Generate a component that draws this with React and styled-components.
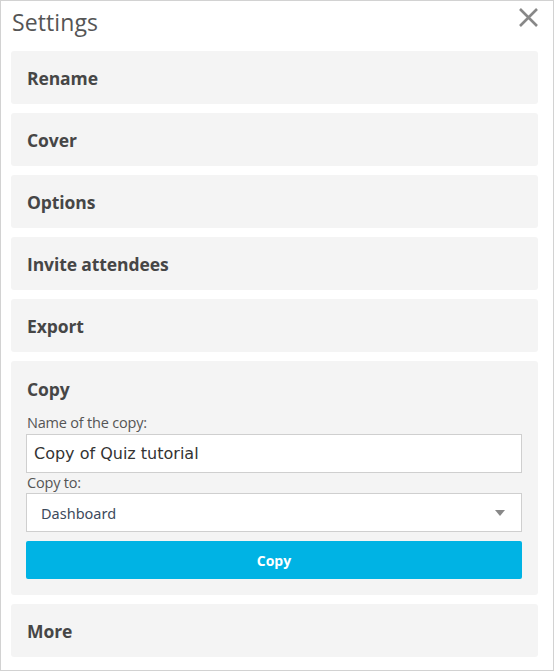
import React from "react";
import styled, { createGlobalStyle } from "styled-components";

const GlobalStyle = createGlobalStyle`
	html, body {
		margin: 0;
		padding: 0;
		background: #fff;
	}
	* {
		box-sizing: border-box;
	}
`;

const sections = ["Rename", "Cover", "Options", "Invite attendees", "Export"];

function App() {
	return (
		<>
			<GlobalStyle />
			<Panel>
				<Header>
					<Title>Settings</Title>
					<Close aria-label="Close">
						<svg width="21" height="21" viewBox="0 0 21 21">
							<path d="M2 2L19 19M19 2L2 19" stroke="#888" strokeWidth="2.6" />
						</svg>
					</Close>
				</Header>
				<List>
					{sections.map((name) => (
						<Section key={name}>
							<SectionTitle>{name}</SectionTitle>
						</Section>
					))}
					<Section open>
						<SectionTitle>Copy</SectionTitle>
						<Form>
							<Label>Name of the copy:</Label>
							<TextInput defaultValue="Copy of Quiz tutorial" />
							<Label>Copy to:</Label>
							<Select>
								<span>Dashboard</span>
								<svg width="10" height="6" viewBox="0 0 10 6">
									<path d="M0 0H10L5 6Z" fill="#888" />
								</svg>
							</Select>
							<CopyButton>Copy</CopyButton>
						</Form>
					</Section>
					<Section>
						<SectionTitle>More</SectionTitle>
					</Section>
				</List>
			</Panel>
		</>
	);
}

const Panel = styled.div`
	width: 554px;
	height: 671px;
	border: 1px solid #d2d2d2;
	padding: 0 15px 0 10px;
	font-family: "Open Sans", "Noto Sans", sans-serif;
`;

const Header = styled.div`
	display: flex;
	justify-content: space-between;
	align-items: flex-start;
	height: 50px;
`;

const Title = styled.h1`
	margin: 5px 0 0 1px;
	font-size: 23px;
	font-weight: 400;
	color: #555;
	letter-spacing: 0.1px;
`;

const Close = styled.button`
	border: none;
	background: none;
	padding: 0;
	margin-top: 6px;
	margin-right: -1px;
	display: flex;
	cursor: pointer;
`;

const List = styled.div`
	display: flex;
	flex-direction: column;
	gap: 9px;
`;

const Section = styled.div`
	background: #f4f4f4;
	border-radius: 3px;
	padding: ${(p) => (p.open ? "15px 16px 16px 15px" : "1px 16px 0 16px")};
	min-height: 53px;
	display: flex;
	flex-direction: column;
	justify-content: ${(p) => (p.open ? "flex-start" : "center")};
`;

const SectionTitle = styled.h2`
	margin: 0 0 0 ${(p) => (p.children === "Copy" ? "1px" : "0")};
	font-size: 17.5px;
	font-weight: 700;
	color: #464646;
	letter-spacing: -0.1px;
	line-height: 26px;
`;

const Form = styled.div`
	display: flex;
	flex-direction: column;
	margin-top: 11px;
`;

const Label = styled.label`
	font-size: 14.5px;
	color: #555;
	line-height: 20px;
	letter-spacing: -0.2px;
	margin-left: 1px;
`;

const TextInput = styled.input`
	height: 39px;
	margin-top: 1px;
	border: 1px solid #cfcfcf;
	background: #fff;
	padding: 0 7px;
	font-family: "DejaVu Sans", "Noto Sans", sans-serif;
	font-size: 16px;
	color: #333;
	outline: none;
`;

const Select = styled.div`
	height: 39px;
	border: 1px solid #cfcfcf;
	background: #fff;
	display: flex;
	align-items: center;
	justify-content: space-between;
	padding: 0 16px 0 14px;
	font-family: "Noto Sans", sans-serif;
	font-size: 14.5px;
	color: #3d4a5c;
`;

const CopyButton = styled.button`
	margin-top: 9px;
	height: 38px;
	border: none;
	border-radius: 2px;
	background: #00b3e4;
	color: #fff;
	font-family: "Open Sans", "Noto Sans", sans-serif;
	font-size: 14px;
	font-weight: 700;
	cursor: pointer;
`;

export default App;
